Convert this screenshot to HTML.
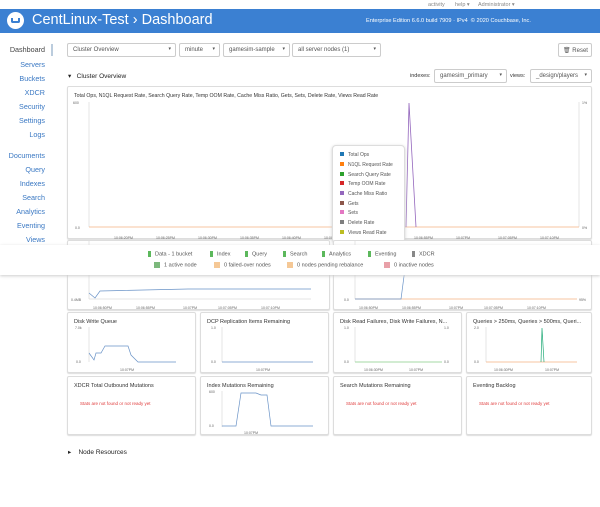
<!DOCTYPE html>
<html><head><meta charset="utf-8"><style>
*{box-sizing:border-box;margin:0;padding:0}
body{width:600px;height:507px;background:#fff;font-family:"Liberation Sans",sans-serif;position:relative;overflow:hidden;color:#333}
.a{position:absolute;white-space:nowrap}
.nav{position:absolute;right:555px;font-size:7.2px;color:#3a78c3;text-align:right}
.sel{position:absolute;top:43px;height:14px;border:1px solid #ccc;border-radius:2px;font-size:6px;padding:3px 5px;color:#555;background:#fff;white-space:nowrap}
.sel b{position:absolute;right:4px;top:2px;font-size:5px;font-weight:normal}
.pan{position:absolute;border:1px solid #ddd;border-radius:2px;background:#fff;box-shadow:0 1px 1px #ddd}
.pt{position:absolute;left:6px;top:6px;font-size:5.5px;color:#333;white-space:nowrap}
.err{position:absolute;left:12px;top:24px;font-size:4.5px;color:#e04040;white-space:nowrap}
.lg{font-size:5.5px;color:#555;position:absolute;white-space:nowrap}
.sw{display:inline-block;width:3px;height:6px;background:#5cb85c;margin-right:4px;vertical-align:middle}
.tt{position:absolute;left:7px;font-size:5px;color:#555;white-space:nowrap}
.tt i{display:inline-block;width:4px;height:4px;margin-right:4px}
</style></head><body>
<div class="a" style="left:428px;top:2px;font-size:5.5px;color:#888">activity</div>
<div class="a" style="left:455px;top:2px;font-size:5.5px;color:#888">help ▾</div>
<div class="a" style="left:478px;top:2px;font-size:5.5px;color:#888">Administrator ▾</div>
<div class="a" style="left:0;top:9px;width:600px;height:24px;background:#3b80d2"></div>
<div class="a" style="left:7px;top:12px;width:17px;height:17px;border-radius:50%;background:#fff"></div>
<div class="a" style="left:11px;top:18px;width:9px;height:5px;border:2px solid #3b80d2;border-top:none;border-radius:0 0 2px 2px"></div>
<div class="a" style="left:32px;top:12px;font-size:14.5px;color:#fff">CentLinux-Test › Dashboard</div>
<div class="a" style="left:366px;top:18px;font-size:5.6px;color:#fff">Enterprise Edition 6.6.0 build 7909 · IPv4 &nbsp;© 2020 Couchbase, Inc.</div>

<div class="a" style="left:51px;top:44px;width:2px;height:12px;background:#bcd"></div>
<div class="nav" style="top:45px;color:#444">Dashboard</div>
<div class="nav" style="top:60px">Servers</div>
<div class="nav" style="top:74px">Buckets</div>
<div class="nav" style="top:88px">XDCR</div>
<div class="nav" style="top:102px">Security</div>
<div class="nav" style="top:116px">Settings</div>
<div class="nav" style="top:130px">Logs</div>
<div class="nav" style="top:151px">Documents</div>
<div class="nav" style="top:165px">Query</div>
<div class="nav" style="top:179px">Indexes</div>
<div class="nav" style="top:193px">Search</div>
<div class="nav" style="top:207px">Analytics</div>
<div class="nav" style="top:221px">Eventing</div>
<div class="nav" style="top:235px">Views</div>

<div class="sel" style="left:67px;width:109px">Cluster Overview<b>▾</b></div>
<div class="sel" style="left:179px;width:41px">minute<b>▾</b></div>
<div class="sel" style="left:223px;width:67px">gamesim-sample<b>▾</b></div>
<div class="sel" style="left:292px;width:89px">all server nodes (1)<b>▾</b></div>
<div class="sel" style="left:558px;width:34px;padding:3px 4px">🗑 Reset</div>
<div class="a" style="left:68px;top:72px;font-size:6.5px;color:#222">▾ &nbsp;&nbsp;Cluster Overview</div>
<div class="a" style="left:410px;top:73px;font-size:5.5px">indexes:</div>
<div class="sel" style="left:434px;top:69px;width:73px">gamesim_primary<b>▾</b></div>
<div class="a" style="left:510px;top:73px;font-size:5.5px">views:</div>
<div class="sel" style="left:530px;top:69px;width:62px">_design/players<b>▾</b></div>

<div class="pan" style="left:67px;top:86px;width:525px;height:153px">
<div class="pt" style="font-size:5.2px">Total Ops, N1QL Request Rate, Search Query Rate, Temp OOM Rate, Cache Miss Ratio, Gets, Sets, Delete Rate, Views Read Rate</div>
<svg class="a" style="left:0;top:0" width="525" height="153">
<line x1="21" y1="15" x2="21" y2="140" stroke="#ccc" stroke-width=".5"/>
<line x1="511" y1="15" x2="511" y2="140" stroke="#ccc" stroke-width=".5"/>
<line x1="21" y1="140" x2="511" y2="140" stroke="#f4b183" stroke-width=".8"/>
<polyline points="338,140 341,16 348,140" fill="none" stroke="#9467bd" stroke-width=".8"/>
<g font-size="3.5" fill="#666" font-family="Liberation Sans">
<text x="5" y="17">600</text><text x="7" y="142">0.0</text><text x="514" y="17">1%</text><text x="514" y="142">0%</text>
<text x="46" y="152">10:06:20PM</text><text x="88" y="152">10:06:25PM</text><text x="130" y="152">10:06:30PM</text><text x="172" y="152">10:06:35PM</text><text x="214" y="152">10:06:40PM</text><text x="256" y="152">10:06:45PM</text><text x="346" y="152">10:06:55PM</text><text x="388" y="152">10:07PM</text><text x="430" y="152">10:07:05PM</text><text x="472" y="152">10:07:10PM</text></g>
</svg>
</div>
<div class="pan" style="left:332px;top:145px;width:73px;height:98px;border-radius:4px;box-shadow:0 1px 3px #ccc">
<div class="tt" style="top:6px"><i style="background:#1f77b4"></i>Total Ops</div>
<div class="tt" style="top:16px"><i style="background:#ff7f0e"></i>N1QL Request Rate</div>
<div class="tt" style="top:26px"><i style="background:#2ca02c"></i>Search Query Rate</div>
<div class="tt" style="top:35px"><i style="background:#d62728"></i>Temp OOM Rate</div>
<div class="tt" style="top:45px"><i style="background:#9467bd"></i>Cache Miss Ratio</div>
<div class="tt" style="top:55px"><i style="background:#8c564b"></i>Gets</div>
<div class="tt" style="top:64px"><i style="background:#e377c2"></i>Sets</div>
<div class="tt" style="top:74px"><i style="background:#7f7f7f"></i>Delete Rate</div>
<div class="tt" style="top:84px"><i style="background:#bcbd22"></i>Views Read Rate</div>
</div>

<div class="pan" style="left:67px;top:240px;width:263px;height:70px">
<svg class="a" width="263" height="70"><line x1="21" y1="0" x2="21" y2="58" stroke="#ccc" stroke-width=".5"/><line x1="21" y1="58" x2="243" y2="58" stroke="#ccc" stroke-width=".5"/><polyline points="21,52 27,57 32,50 120,48 243,48" fill="none" stroke="#6a93c7" stroke-width=".7"/><g font-size="3.5" fill="#666"><text x="3" y="60">0.4MB</text><text x="25" y="68">10:06:50PM</text><text x="68" y="68">10:06:55PM</text><text x="115" y="68">10:07PM</text><text x="150" y="68">10:07:05PM</text><text x="193" y="68">10:07:10PM</text></g></svg>
</div>
<div class="pan" style="left:333px;top:240px;width:259px;height:70px">
<svg class="a" width="259" height="70"><line x1="21" y1="0" x2="21" y2="58" stroke="#ccc" stroke-width=".5"/><line x1="21" y1="58" x2="243" y2="58" stroke="#f4b183" stroke-width=".7"/><polyline points="21,58 67,58 72,20" fill="none" stroke="#6a93c7" stroke-width=".7"/><g font-size="3.5" fill="#666"><text x="10" y="60">0.0</text><text x="245" y="60">95%</text><text x="25" y="68">10:06:50PM</text><text x="68" y="68">10:06:55PM</text><text x="115" y="68">10:07PM</text><text x="150" y="68">10:07:05PM</text><text x="193" y="68">10:07:10PM</text></g></svg>
</div>

<div class="a" style="left:0;top:245px;width:600px;height:30px;background:#fff;box-shadow:0 1px 3px #ccc"></div>
<div class="lg" style="left:148px;top:251px"><span class="sw"></span>Data - 1 bucket</div>
<div class="lg" style="left:210px;top:251px"><span class="sw"></span>Index</div>
<div class="lg" style="left:245px;top:251px"><span class="sw"></span>Query</div>
<div class="lg" style="left:283px;top:251px"><span class="sw"></span>Search</div>
<div class="lg" style="left:322px;top:251px"><span class="sw"></span>Analytics</div>
<div class="lg" style="left:368px;top:251px"><span class="sw"></span>Eventing</div>
<div class="lg" style="left:412px;top:251px"><span class="sw" style="background:#888"></span>XDCR</div>
<div class="lg" style="left:154px;top:262px"><span class="sw" style="width:6px;background:#7cb87c"></span>1 active node</div>
<div class="lg" style="left:214px;top:262px"><span class="sw" style="width:6px;background:#f5c896"></span>0 failed-over nodes</div>
<div class="lg" style="left:287px;top:262px"><span class="sw" style="width:6px;background:#f5c896"></span>0 nodes pending rebalance</div>
<div class="lg" style="left:384px;top:262px"><span class="sw" style="width:6px;background:#e8a0a8"></span>0 inactive nodes</div>

<div class="pan" style="left:67px;top:312px;width:129px;height:61px"><div class="pt">Disk Write Queue</div>
<svg class="a" width="129" height="61"><line x1="21" y1="14" x2="21" y2="49" stroke="#ccc" stroke-width=".5"/><polyline points="21,40 26,47 28,40 33,40 37,33 60,33 63,42 70,49 108,49" fill="none" stroke="#6a93c7" stroke-width=".7"/><g font-size="3.5" fill="#666"><text x="7" y="16">7.0k</text><text x="8" y="50">0.0</text><text x="52" y="58">10:07PM</text></g></svg></div>
<div class="pan" style="left:200px;top:312px;width:129px;height:61px"><div class="pt">DCP Replication Items Remaining</div>
<svg class="a" width="129" height="61"><line x1="21" y1="14" x2="21" y2="49" stroke="#ccc" stroke-width=".5"/><line x1="21" y1="49" x2="112" y2="49" stroke="#6a93c7" stroke-width=".7"/><g font-size="3.5" fill="#666"><text x="10" y="16">1.0</text><text x="10" y="50">0.0</text><text x="55" y="58">10:07PM</text></g></svg></div>
<div class="pan" style="left:333px;top:312px;width:129px;height:61px"><div class="pt">Disk Read Failures, Disk Write Failures, N...</div>
<svg class="a" width="129" height="61"><line x1="21" y1="14" x2="21" y2="49" stroke="#ccc" stroke-width=".5"/><line x1="21" y1="49" x2="108" y2="49" stroke="#8c8" stroke-width=".7"/><g font-size="3.5" fill="#666"><text x="10" y="16">1.0</text><text x="10" y="50">0.0</text><text x="110" y="16">1.0</text><text x="110" y="50">0.0</text><text x="30" y="58">10:06:30PM</text><text x="75" y="58">10:07PM</text></g></svg></div>
<div class="pan" style="left:466px;top:312px;width:126px;height:61px"><div class="pt">Queries &gt; 250ms, Queries &gt; 500ms, Queri...</div>
<svg class="a" width="126" height="61"><line x1="19" y1="14" x2="19" y2="49" stroke="#ccc" stroke-width=".5"/><line x1="19" y1="49" x2="110" y2="49" stroke="#f4b183" stroke-width=".7"/><polyline points="74,49 75,15 77,49" fill="none" stroke="#2a7" stroke-width=".7"/><g font-size="3.5" fill="#666"><text x="7" y="16">2.0</text><text x="7" y="50">0.0</text><text x="27" y="58">10:06:30PM</text><text x="78" y="58">10:07PM</text></g></svg></div>

<div class="pan" style="left:67px;top:376px;width:129px;height:59px"><div class="pt">XDCR Total Outbound Mutations</div><div class="err">Stats are not found or not ready yet</div></div>
<div class="pan" style="left:200px;top:376px;width:129px;height:59px"><div class="pt">Index Mutations Remaining</div>
<svg class="a" width="129" height="59"><line x1="21" y1="14" x2="21" y2="50" stroke="#ccc" stroke-width=".5"/><polyline points="21,49 35,49 40,16 55,16 60,18 66,18 70,49 112,49" fill="none" stroke="#6a93c7" stroke-width=".7"/><g font-size="3.5" fill="#666"><text x="8" y="16">600</text><text x="8" y="50">0.0</text><text x="43" y="57">10:07PM</text></g></svg></div>
<div class="pan" style="left:333px;top:376px;width:129px;height:59px"><div class="pt">Search Mutations Remaining</div><div class="err">Stats are not found or not ready yet</div></div>
<div class="pan" style="left:466px;top:376px;width:126px;height:59px"><div class="pt">Eventing Backlog</div><div class="err">Stats are not found or not ready yet</div></div>

<div class="a" style="left:68px;top:448px;font-size:6.5px;color:#222">▸ &nbsp;&nbsp;&nbsp;Node Resources</div>
</body></html>
